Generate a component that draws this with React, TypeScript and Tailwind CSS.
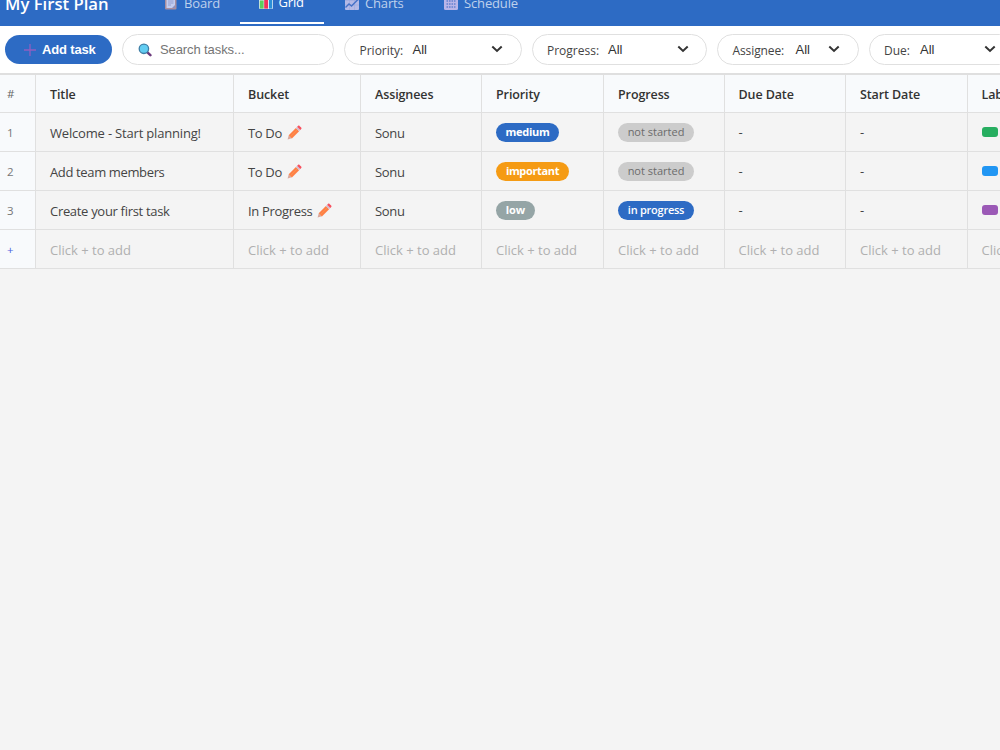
import React from 'react';

const columns = ['Title', 'Bucket', 'Assignees', 'Priority', 'Progress', 'Due Date', 'Start Date', 'Labels'];

const tasks = [
  {
    title: 'Welcome - Start planning!',
    titleStyle: 'tracking-[-0.18px]',
    bucket: 'To Do',
    bucketStyle: 'tracking-[-0.35px]',
    priority: 'medium',
    priorityStyle: 'bg-[#2d6bc4] w-[63px] tracking-[-0.25px]',
    progress: 'not started',
    progressStyle: 'bg-[#cccccc] text-[#6b6b6b]',
    label: 'bg-[#27ae60]',
  },
  {
    title: 'Add team members',
    titleStyle: 'tracking-[-0.36px]',
    bucket: 'To Do',
    bucketStyle: 'tracking-[-0.35px]',
    priority: 'important',
    priorityStyle: 'bg-[#f59b14] w-[73px] tracking-[-0.35px]',
    progress: 'not started',
    progressStyle: 'bg-[#cccccc] text-[#6b6b6b]',
    label: 'bg-[#2196f3]',
  },
  {
    title: 'Create your first task',
    titleStyle: 'tracking-[-0.31px]',
    bucket: 'In Progress',
    bucketStyle: 'tracking-[-0.32px]',
    priority: 'low',
    priorityStyle: 'bg-[#95a5a6] w-[39px]',
    progress: 'in progress',
    progressStyle: 'bg-[#2d6bc4] text-white font-semibold tracking-[-0.25px]',
    label: 'bg-[#9b59b6]',
  },
];

const rowGrid =
  'grid w-[1089.5px] grid-cols-[36px_198px_127px_121px_122px_120.5px_121.5px_121.5px_122px]';

const BoardIcon = () => (
  <svg width="14" height="14" viewBox="0 0 14 14">
    <rect x="1" y="0.5" width="11.5" height="13" rx="1" fill="#a98f9f" />
    <rect x="2.5" y="2" width="8.5" height="10" fill="#c3cdf0" />
    <rect x="4.5" y="0" width="5" height="2.5" fill="#9aa6c8" />
    <path d="M4 5h5.5M4 7h5.5M4 9h3" stroke="#8792c8" strokeWidth="0.8" />
    <path d="M8 12l3-3v3z" fill="#8d91c0" />
  </svg>
);

const GridIcon = () => (
  <svg width="14" height="14" viewBox="0 0 14 14">
    <rect width="14" height="14" rx="1" fill="#dbe6f2" />
    <rect x="0.8" y="5.5" width="3.8" height="8.1" fill="#5ad05c" />
    <rect x="5.2" y="7" width="3.8" height="6.6" fill="#f0325a" />
    <rect x="5.2" y="3.5" width="3.8" height="3.5" fill="#f0325a" />
    <rect x="10" y="4" width="3.2" height="9.6" fill="#2a8fd8" />
  </svg>
);

const ChartIcon = () => (
  <svg width="14" height="14" viewBox="0 0 14 14">
    <rect width="14" height="14" rx="1" fill="#b4b9e6" />
    <path d="M0 4.5h14M0 9h14M4.5 0v14M9.5 0v14" stroke="#9ba7de" strokeWidth="0.6" />
    <path d="M0.5 11.5L4 8l2.5 2L13 3.5" fill="none" stroke="#4672c8" strokeWidth="1.4" />
  </svg>
);

const ScheduleIcon = () => (
  <svg width="14" height="14" viewBox="0 0 14 14">
    <rect width="14" height="14" rx="1.5" fill="#b9b5e8" />
    <path d="M2.5 5h9M2.5 8h9M2.5 11h9" stroke="#6280cf" strokeWidth="1.3" strokeDasharray="1.6 0.9" />
  </svg>
);

const SearchIcon = () => (
  <svg width="14" height="14" viewBox="0 0 14 14">
    <path d="M9.4 9.4l3 2.8" stroke="#6c3b7d" strokeWidth="2.5" strokeLinecap="round" />
    <circle cx="5.9" cy="5.8" r="4.7" fill="#62cdf2" stroke="#3f7fa6" strokeWidth="1.3" />
  </svg>
);

const PencilIcon = () => (
  <svg width="15" height="15" viewBox="0 0 15 15">
    <path d="M0.6 14.4l1.2-4.1 3 3z" fill="#d9a79b" />
    <path d="M1.7 10.2L8.9 3l3.2 3.2-7.2 7.2z" fill="#ff7f45" />
    <path d="M3.4 11.8L10.4 4.7" stroke="#fb9450" strokeWidth="1" />
    <path d="M8.9 3l1.2-1.2 3.2 3.2-1.2 1.2z" fill="#d3bcd0" />
    <path d="M10.1 1.8l.9-.9c.5-.5 1-.5 1.5 0l1.7 1.7c.5.5.5 1 0 1.5l-.9.9z" fill="#f8505e" />
  </svg>
);

const Chevron = () => (
  <svg width="12" height="8" viewBox="0 0 12 8" className="mb-[2px]">
    <path d="M1.3 1.6L6 6l4.7-4.4" fill="none" stroke="#333" strokeWidth="2" />
  </svg>
);

const tabs = [
  { name: 'Board', icon: <BoardIcon />, style: 'ml-[39px] w-[86px] text-white/70' },
  { name: 'Grid', icon: <GridIcon />, style: 'ml-[2.5px] w-[84px] border-b-2 border-white pl-[6px] text-white' },
  { name: 'Charts', icon: <ChartIcon />, style: 'ml-[8.5px] w-[91px] text-white/70' },
  { name: 'Schedule', icon: <ScheduleIcon />, style: 'ml-[8px] w-[110px] text-white/70' },
];

const filters = [
  { name: 'Priority:', style: 'w-[177.5px]', label: 'w-[53px]' },
  { name: 'Progress:', style: 'w-[175.5px]', label: 'w-[61px]' },
  { name: 'Assignee:', style: 'w-[141.5px]', label: 'w-[63px] tracking-[-0.1px]' },
  { name: 'Due:', style: 'w-[146px]', label: 'w-[36px]' },
];

const Header = () => (
  <header className="-mt-[18px] flex h-[44px] shrink-0 bg-[#2d6bc4] pl-[5px]">
    <h1 className="flex h-[42px] w-[107px] items-center pt-[2px] text-[16.7px] font-semibold whitespace-nowrap text-white">
      My First Plan
    </h1>
    <nav className="flex">
      {tabs.map((tab) => (
        <div key={tab.name} className={`flex h-[42px] items-center text-[13px] ${tab.style}`}>
          <span className="mr-[6px] ml-[13px] w-[14px] shrink-0">{tab.icon}</span>
          <span className="pt-px tracking-[-0.15px]">{tab.name}</span>
        </div>
      ))}
    </nav>
  </header>
);

const Toolbar = () => (
  <div className="flex h-[47px] w-[1020px] shrink-0 items-center gap-[10px] bg-white pl-[5px] text-[13px]">
    <button className="flex h-[29px] w-[107px] shrink-0 items-center rounded-full bg-[#2d6bc4] pl-[19px] font-['Liberation_Sans',sans-serif] text-[13px] font-bold tracking-[-0.15px] text-white">
      <svg width="12" height="12" viewBox="0 0 12 12" className="mr-[6px]">
        <path d="M6 0v12M0 6h12" stroke="#8f5fc0" strokeWidth="1.3" />
      </svg>
      Add task
    </button>
    <div className="flex h-[31px] w-[212px] shrink-0 items-center rounded-full border border-[#e0e0e0] pl-[15px]">
      <SearchIcon />
      <span className="ml-[8px] font-['Liberation_Sans',sans-serif] text-[13px] tracking-[-0.1px] text-[#757575]">
        Search tasks...
      </span>
    </div>
    {filters.map((filter) => (
      <div
        key={filter.name}
        className={`flex h-[31px] shrink-0 items-center rounded-full border border-[#e0e0e0] pr-[17.5px] pl-[14.5px] text-[#444] ${filter.style}`}
      >
        <span className={`pt-[2px] text-[12px] whitespace-nowrap ${filter.label}`}>{filter.name}</span>
        <span className="flex-1 font-['Liberation_Sans',sans-serif] text-[#333]">All</span>
        <Chevron />
      </div>
    ))}
  </div>
);

const Cell = ({ children, className = '' }: { children: React.ReactNode; className?: string }) => (
  <div className={`flex items-center border-r border-b border-[#e0e0e0] pl-[14px] whitespace-nowrap ${className}`}>
    {children}
  </div>
);

const NumberCell = ({ children, className = 'text-[#777]' }: { children: React.ReactNode; className?: string }) => (
  <div className={`flex items-center border-r border-b border-[#e0e0e0] bg-[#f8fafc] pt-px pl-[7px] text-[11.5px] ${className}`}>
    {children}
  </div>
);

const App = () => {
  return (
    <div className="flex h-[750px] w-full flex-col overflow-hidden bg-[#f4f4f4] font-['Open_Sans','Noto_Sans',sans-serif] text-[13px] text-[#444]">
      <Header />
      <Toolbar />
      <div className="border-t-2 border-[#dfdfdf]">
        <div className={`${rowGrid} h-[38px] bg-[#f8fafc] font-semibold text-[#333]`}>
          <NumberCell className="font-normal text-[#666]">#</NumberCell>
          {columns.map((column) => (
            <Cell key={column} className="pt-[3px] text-[12.5px] tracking-[-0.1px]">
              {column}
            </Cell>
          ))}
        </div>

        {tasks.map((task, index) => (
          <div key={task.title} className={`${rowGrid} h-[39px]`}>
            <NumberCell>{index + 1}</NumberCell>
            <Cell className={`pt-[3px] ${task.titleStyle}`}>{task.title}</Cell>
            <Cell>
              <span className={`mr-[5px] pt-[3px] ${task.bucketStyle}`}>{task.bucket}</span>
              <PencilIcon />
            </Cell>
            <Cell className="pt-[3px] tracking-[-0.3px]">Sonu</Cell>
            <Cell>
              <span
                className={`flex h-[19px] items-center justify-center rounded-full pt-px text-[11px] font-bold text-white ${task.priorityStyle}`}
              >
                {task.priority}
              </span>
            </Cell>
            <Cell>
              <span
                className={`flex h-[19px] w-[76px] items-center justify-center rounded-full pt-px text-[11px] ${task.progressStyle}`}
              >
                {task.progress}
              </span>
            </Cell>
            <Cell className="pt-[2px]">-</Cell>
            <Cell className="pt-[2px]">-</Cell>
            <Cell>
              <span className={`h-[10px] w-[16px] rounded-[3px] ${task.label}`}></span>
            </Cell>
          </div>
        ))}

        {/* Empty row used to add a task */}
        <div className={`${rowGrid} h-[39px] text-[#b0b0b0]`}>
          <NumberCell className="text-[#4a5fe0]">+</NumberCell>
          {columns.map((column) => (
            <Cell key={column} className="pt-[3px]">
              Click + to add
            </Cell>
          ))}
        </div>
      </div>
    </div>
  );
};

export default App;
